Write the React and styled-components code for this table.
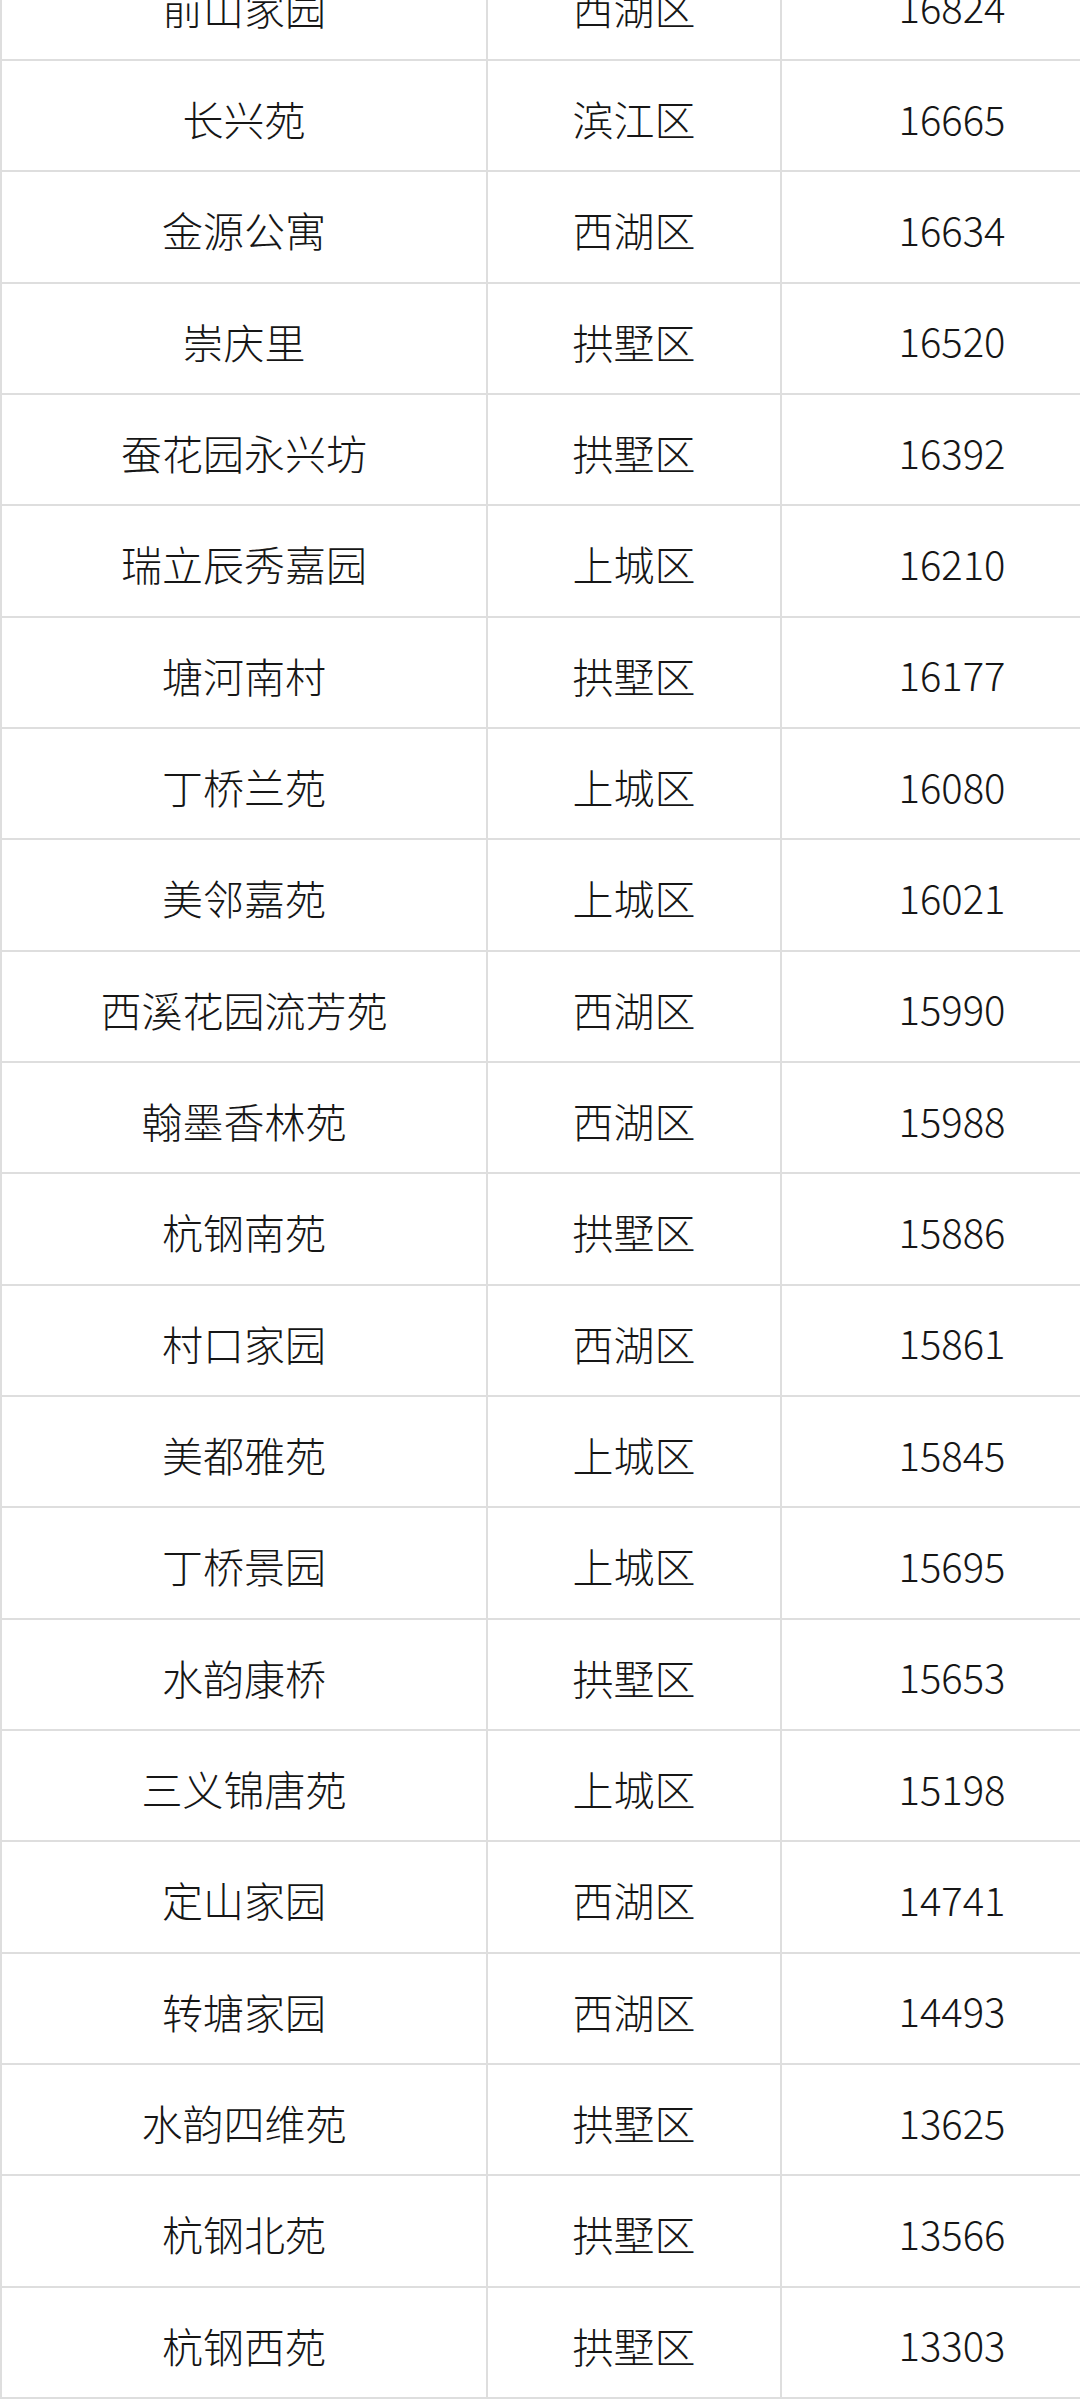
import styled, { createGlobalStyle } from 'styled-components';

const rows = [
  ['前山家园', '西湖区', '16824'],
  ['长兴苑', '滨江区', '16665'],
  ['金源公寓', '西湖区', '16634'],
  ['崇庆里', '拱墅区', '16520'],
  ['蚕花园永兴坊', '拱墅区', '16392'],
  ['瑞立辰秀嘉园', '上城区', '16210'],
  ['塘河南村', '拱墅区', '16177'],
  ['丁桥兰苑', '上城区', '16080'],
  ['美邻嘉苑', '上城区', '16021'],
  ['西溪花园流芳苑', '西湖区', '15990'],
  ['翰墨香林苑', '西湖区', '15988'],
  ['杭钢南苑', '拱墅区', '15886'],
  ['村口家园', '西湖区', '15861'],
  ['美都雅苑', '上城区', '15845'],
  ['丁桥景园', '上城区', '15695'],
  ['水韵康桥', '拱墅区', '15653'],
  ['三义锦唐苑', '上城区', '15198'],
  ['定山家园', '西湖区', '14741'],
  ['转塘家园', '西湖区', '14493'],
  ['水韵四维苑', '拱墅区', '13625'],
  ['杭钢北苑', '拱墅区', '13566'],
  ['杭钢西苑', '拱墅区', '13303'],
];

const GlobalStyle = createGlobalStyle`
  html, body {
    margin: 0;
    padding: 0;
    background: #fff;
    overflow: hidden;
  }
  body {
    width: 1080px;
    height: 2400px;
    font-family: "Noto Sans CJK SC", "Noto Sans", sans-serif;
  }
`;

const Viewport = styled.div`
  width: 1080px;
  height: 2400px;
  overflow: hidden;
`;

const Table = styled.div`
  display: grid;
  grid-template-columns: 486px 294px 342px;
  grid-auto-rows: 111.33px;
  width: 1122px;
  margin-top: -50.33px;
  border-left: 2px solid #dedede;
  box-sizing: border-box;
`;

const Cell = styled.div`
  display: flex;
  align-items: center;
  justify-content: center;
  box-sizing: border-box;
  border-right: 2px solid #dedede;
  border-bottom: 2px solid #dedede;
  padding-top: ${p => (p.$num ? '4px' : '6px')};
  font-size: ${p => (p.$num ? '40px' : '41px')};
  font-weight: 300;
  line-height: 1;
  color: #161616;
  font-family: "Noto Sans CJK SC", sans-serif;
`;

export default function App() {
  return (
    <Viewport>
      <GlobalStyle />
      <Table>
        {rows.map(([name, district, price]) => (
          <>
            <Cell key={name + 'n'}>{name}</Cell>
            <Cell key={name + 'd'}>{district}</Cell>
            <Cell key={name + 'p'} $num>{price}</Cell>
          </>
        ))}
      </Table>
    </Viewport>
  );
}
